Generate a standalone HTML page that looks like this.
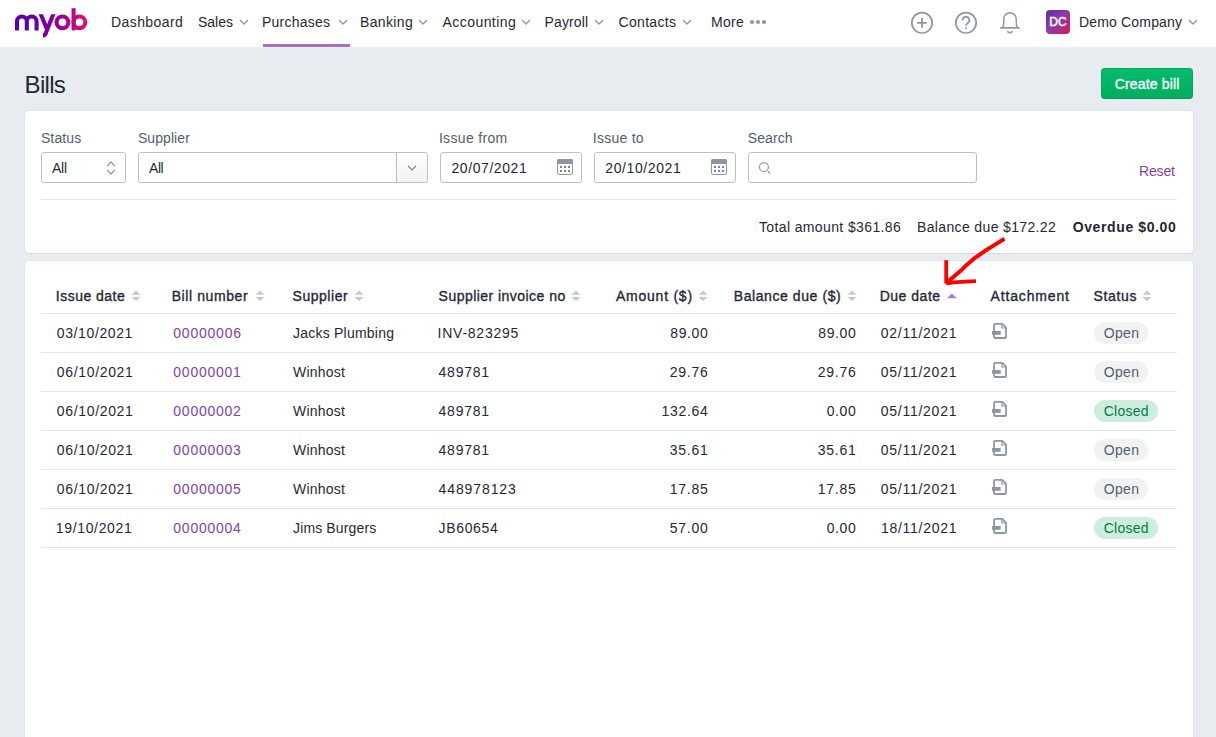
<!DOCTYPE html>
<html><head><meta charset="utf-8">
<style>
*{box-sizing:border-box;margin:0;padding:0}
html,body{width:1216px;height:737px;overflow:hidden}
body{background:#e8ebef;font-family:"Liberation Sans",sans-serif;color:#1f2933;position:relative}
.a{position:absolute}
.t{position:absolute;white-space:nowrap}
.card{position:absolute;background:#fff;border-radius:4px;box-shadow:0 0 0 1px rgba(0,0,0,0.025),0 1px 1px rgba(0,0,0,0.05)}
.inp{position:absolute;border:1px solid #bcc1c8;border-radius:3px;background:#fff}
.rl{position:absolute;left:41px;width:1136px;height:1px;background:#e3e5e9}
</style></head>
<body>
<div class="a" style="left:0;top:0;width:1216px;height:47px;background:#fff"></div><div class="a" style="left:0;top:47px;width:1216px;height:1px;background:#eef0f3"></div>
<div class="a" style="left:1101px;top:68px;width:92px;height:31px;border-radius:4px;background:linear-gradient(#00bd6c,#00ad5e);box-shadow:inset 0 0 0 1px rgba(0,120,60,0.25)"></div>
<div class="card" style="left:25px;top:111px;width:1168px;height:142px"></div>
<div class="card" style="left:25px;top:261px;width:1168px;height:520px"></div>
<div class="inp" style="left:41px;top:152px;width:85px;height:31px"></div><div class="inp" style="left:138px;top:152px;width:290px;height:31px"></div><div class="a" style="left:396px;top:153px;width:31px;height:29px;background:linear-gradient(#ffffff,#f2f2f2);border-left:1px solid #b9bec6;border-radius:0 3px 3px 0"></div><svg class="a" style="left:407px;top:165px" width="10" height="6"><path d="M1,1 L5.0,5 L9,1" fill="none" stroke="#7d8793" stroke-width="1.15"/></svg><div class="inp" style="left:440px;top:152px;width:142px;height:31px"></div><div class="inp" style="left:594px;top:152px;width:142px;height:31px"></div><div class="inp" style="left:748px;top:152px;width:229px;height:31px"></div><svg class="a" style="left:106px;top:161px" width="10" height="14"><path d="M1,5 L5,1 L9,5 M1,9 L5,13 L9,9" fill="none" stroke="#8a949f" stroke-width="1.1"/></svg><svg class="a" style="left:557px;top:159px" width="16" height="16"><rect x="0.5" y="0.5" width="15" height="15" rx="1.5" fill="none" stroke="#8d96a3"/><rect x="0" y="0" width="16" height="5" rx="1.5" fill="#8d96a3"/><rect x="3" y="7" width="2" height="2" fill="#78828e"/><rect x="3" y="11" width="2" height="2" fill="#78828e"/><rect x="7" y="7" width="2" height="2" fill="#78828e"/><rect x="7" y="11" width="2" height="2" fill="#78828e"/><rect x="11" y="7" width="2" height="2" fill="#78828e"/><rect x="11" y="11" width="2" height="2" fill="#78828e"/></svg><svg class="a" style="left:711px;top:159px" width="16" height="16"><rect x="0.5" y="0.5" width="15" height="15" rx="1.5" fill="none" stroke="#8d96a3"/><rect x="0" y="0" width="16" height="5" rx="1.5" fill="#8d96a3"/><rect x="3" y="7" width="2" height="2" fill="#78828e"/><rect x="3" y="11" width="2" height="2" fill="#78828e"/><rect x="7" y="7" width="2" height="2" fill="#78828e"/><rect x="7" y="11" width="2" height="2" fill="#78828e"/><rect x="11" y="7" width="2" height="2" fill="#78828e"/><rect x="11" y="11" width="2" height="2" fill="#78828e"/></svg><svg class="a" style="left:757px;top:160px" width="16" height="16"><circle cx="6.9" cy="7" r="4.5" fill="none" stroke="#939ca8" stroke-width="1.25"/><path d="M11,11.2 L12.9,13.5" stroke="#939ca8" stroke-width="1.3"/></svg>
<div class="rl" style="top:199px"></div><div class="rl" style="top:313px"></div><div class="rl" style="top:352px"></div><div class="rl" style="top:391px"></div><div class="rl" style="top:430px"></div><div class="rl" style="top:469px"></div><div class="rl" style="top:508px"></div><div class="rl" style="top:547px"></div><svg class="a" style="left:131.4px;top:290px" width="10" height="12"><path d="M0.5,4.8 L5,0.5 L9.5,4.8 Z M0.5,6.9 L5,11.2 L9.5,6.9 Z" fill="#c5cad2"/></svg><svg class="a" style="left:254.5px;top:290px" width="10" height="12"><path d="M0.5,4.8 L5,0.5 L9.5,4.8 Z M0.5,6.9 L5,11.2 L9.5,6.9 Z" fill="#c5cad2"/></svg><svg class="a" style="left:354.3px;top:290px" width="10" height="12"><path d="M0.5,4.8 L5,0.5 L9.5,4.8 Z M0.5,6.9 L5,11.2 L9.5,6.9 Z" fill="#c5cad2"/></svg><svg class="a" style="left:571px;top:290px" width="10" height="12"><path d="M0.5,4.8 L5,0.5 L9.5,4.8 Z M0.5,6.9 L5,11.2 L9.5,6.9 Z" fill="#c5cad2"/></svg><svg class="a" style="left:698px;top:290px" width="10" height="12"><path d="M0.5,4.8 L5,0.5 L9.5,4.8 Z M0.5,6.9 L5,11.2 L9.5,6.9 Z" fill="#c5cad2"/></svg><svg class="a" style="left:846.8px;top:290px" width="10" height="12"><path d="M0.5,4.8 L5,0.5 L9.5,4.8 Z M0.5,6.9 L5,11.2 L9.5,6.9 Z" fill="#c5cad2"/></svg><svg class="a" style="left:1142.2px;top:290px" width="10" height="12"><path d="M0.5,4.8 L5,0.5 L9.5,4.8 Z M0.5,6.9 L5,11.2 L9.5,6.9 Z" fill="#c5cad2"/></svg><svg class="a" style="left:946px;top:293px" width="12" height="6"><path d="M1,5.3 L5.9,0.4 L10.8,5.3 Z" fill="#a87bd1"/></svg><svg class="a" style="left:992px;top:322px" width="16" height="18"><path d="M2.1,15 V2.9 Q2.1,1.9 3.1,1.9 H10.3 L14,5.6 V15 Q14,16 13,16 H3.1 Q2.1,16 2.1,15 Z" fill="none" stroke="#8d96a3" stroke-width="1.8" stroke-linejoin="round"/><path d="M9.9,2 V6 H14" fill="none" stroke="#8d96a3" stroke-width="1.2"/><rect x="0" y="9" width="8.7" height="3.8" fill="#8d96a3"/></svg><div class="a" style="left:1094px;top:322px;width:54px;height:22px;border-radius:11px;background:#f1f2f4"></div><svg class="a" style="left:992px;top:361px" width="16" height="18"><path d="M2.1,15 V2.9 Q2.1,1.9 3.1,1.9 H10.3 L14,5.6 V15 Q14,16 13,16 H3.1 Q2.1,16 2.1,15 Z" fill="none" stroke="#8d96a3" stroke-width="1.8" stroke-linejoin="round"/><path d="M9.9,2 V6 H14" fill="none" stroke="#8d96a3" stroke-width="1.2"/><rect x="0" y="9" width="8.7" height="3.8" fill="#8d96a3"/></svg><div class="a" style="left:1094px;top:361px;width:54px;height:22px;border-radius:11px;background:#f1f2f4"></div><svg class="a" style="left:992px;top:400px" width="16" height="18"><path d="M2.1,15 V2.9 Q2.1,1.9 3.1,1.9 H10.3 L14,5.6 V15 Q14,16 13,16 H3.1 Q2.1,16 2.1,15 Z" fill="none" stroke="#8d96a3" stroke-width="1.8" stroke-linejoin="round"/><path d="M9.9,2 V6 H14" fill="none" stroke="#8d96a3" stroke-width="1.2"/><rect x="0" y="9" width="8.7" height="3.8" fill="#8d96a3"/></svg><div class="a" style="left:1094px;top:400px;width:64px;height:22px;border-radius:11px;background:#cdeedc"></div><svg class="a" style="left:992px;top:439px" width="16" height="18"><path d="M2.1,15 V2.9 Q2.1,1.9 3.1,1.9 H10.3 L14,5.6 V15 Q14,16 13,16 H3.1 Q2.1,16 2.1,15 Z" fill="none" stroke="#8d96a3" stroke-width="1.8" stroke-linejoin="round"/><path d="M9.9,2 V6 H14" fill="none" stroke="#8d96a3" stroke-width="1.2"/><rect x="0" y="9" width="8.7" height="3.8" fill="#8d96a3"/></svg><div class="a" style="left:1094px;top:439px;width:54px;height:22px;border-radius:11px;background:#f1f2f4"></div><svg class="a" style="left:992px;top:478px" width="16" height="18"><path d="M2.1,15 V2.9 Q2.1,1.9 3.1,1.9 H10.3 L14,5.6 V15 Q14,16 13,16 H3.1 Q2.1,16 2.1,15 Z" fill="none" stroke="#8d96a3" stroke-width="1.8" stroke-linejoin="round"/><path d="M9.9,2 V6 H14" fill="none" stroke="#8d96a3" stroke-width="1.2"/><rect x="0" y="9" width="8.7" height="3.8" fill="#8d96a3"/></svg><div class="a" style="left:1094px;top:478px;width:54px;height:22px;border-radius:11px;background:#f1f2f4"></div><svg class="a" style="left:992px;top:517px" width="16" height="18"><path d="M2.1,15 V2.9 Q2.1,1.9 3.1,1.9 H10.3 L14,5.6 V15 Q14,16 13,16 H3.1 Q2.1,16 2.1,15 Z" fill="none" stroke="#8d96a3" stroke-width="1.8" stroke-linejoin="round"/><path d="M9.9,2 V6 H14" fill="none" stroke="#8d96a3" stroke-width="1.2"/><rect x="0" y="9" width="8.7" height="3.8" fill="#8d96a3"/></svg><div class="a" style="left:1094px;top:517px;width:64px;height:22px;border-radius:11px;background:#cdeedc"></div><svg class="a" style="left:930px;top:230px" width="90" height="70"><g fill="none" stroke="#ff0000" stroke-linejoin="round"><path d="M74.5,8.8 L65.9,14.1 L55.1,20.8 L44.2,28.4 L36.6,34.9 L31.2,40.3 L22.5,47.7 L16.6,52.6" stroke-width="4"/><path d="M16.2,30.2 V53.6" stroke-width="3.8"/><path d="M16.2,53.3 L27,52.2 L46,51.1" stroke-width="3.8"/></g></svg>
<svg class="a" style="left:238.5px;top:19px" width="10" height="6"><path d="M1,1 L5.0,5 L9,1" fill="none" stroke="#8e99a6" stroke-width="1.3"/></svg><svg class="a" style="left:337.5px;top:19px" width="10" height="6"><path d="M1,1 L5.0,5 L9,1" fill="none" stroke="#8e99a6" stroke-width="1.3"/></svg><svg class="a" style="left:417.5px;top:19px" width="10" height="6"><path d="M1,1 L5.0,5 L9,1" fill="none" stroke="#8e99a6" stroke-width="1.3"/></svg><svg class="a" style="left:520.5px;top:19px" width="10" height="6"><path d="M1,1 L5.0,5 L9,1" fill="none" stroke="#8e99a6" stroke-width="1.3"/></svg><svg class="a" style="left:593.5px;top:19px" width="10" height="6"><path d="M1,1 L5.0,5 L9,1" fill="none" stroke="#8e99a6" stroke-width="1.3"/></svg><svg class="a" style="left:682px;top:19px" width="10" height="6"><path d="M1,1 L5.0,5 L9,1" fill="none" stroke="#8e99a6" stroke-width="1.3"/></svg><svg class="a" style="left:1188px;top:19px" width="10" height="6"><path d="M1,1 L5.0,5 L9,1" fill="none" stroke="#8e99a6" stroke-width="1.3"/></svg><svg class="a" style="left:748px;top:18px" width="20" height="8"><circle cx="4" cy="4" r="2.1" fill="#8e99a6"/><circle cx="10" cy="4" r="2.1" fill="#8e99a6"/><circle cx="16" cy="4" r="2.1" fill="#8e99a6"/></svg><svg class="a" style="left:910px;top:11px" width="24" height="24"><circle cx="12" cy="11.8" r="10.2" fill="none" stroke="#8e99a6" stroke-width="1.7"/><path d="M7.2,11.8 H16.8 M12,7 V16.8" stroke="#8e99a6" stroke-width="1.8"/></svg><svg class="a" style="left:954px;top:11px" width="24" height="24"><circle cx="12" cy="11.8" r="10.2" fill="none" stroke="#8e99a6" stroke-width="1.7"/><path d="M8.6,9.4 A3.4,3.4 0 1 1 13.6,12.2 C12.6,12.9 12,13.3 12,14.4 V14.8" fill="none" stroke="#8e99a6" stroke-width="1.8"/><rect x="11.1" y="16.4" width="1.8" height="1.7" fill="#8e99a6"/></svg><svg class="a" style="left:998px;top:10px" width="24" height="26"><path d="M4.6,17.6 C5.8,16.2 5.75,14.2 5.75,12 V9 A6.25,6.25 0 0 1 18.25,9 V12 C18.25,14.2 18.2,16.2 19.4,17.6" fill="none" stroke="#8e99a6" stroke-width="1.5" stroke-linejoin="round"/><path d="M2.8,17.9 H21.2" stroke="#8e99a6" stroke-width="1.6" stroke-linecap="round"/><path d="M9.7,21.7 Q12,23.8 14.3,21.7" fill="none" stroke="#8e99a6" stroke-width="1.6" stroke-linecap="round"/></svg><svg class="a" style="left:1046px;top:10px" width="24" height="24"><defs><linearGradient id="av" x1="0" y1="0" x2="1" y2="1"><stop offset="0" stop-color="#5d2e91"/><stop offset="0.45" stop-color="#8a3daf"/><stop offset="1" stop-color="#d8174f"/></linearGradient></defs><rect width="24" height="24" rx="4" fill="url(#av)"/><text x="12" y="16.3" text-anchor="middle" font-family="Liberation Sans" font-size="12" stroke="#fff" stroke-width="0.45" fill="#fff">DC</text></svg><svg class="a" style="left:0px;top:0px" width="100" height="46"><defs><linearGradient id="lg" gradientUnits="userSpaceOnUse" x1="15" y1="0" x2="88" y2="0"><stop offset="0" stop-color="#5a00aa"/><stop offset="0.35" stop-color="#6c00a6"/><stop offset="0.65" stop-color="#a0008e"/><stop offset="1" stop-color="#ea0f6f"/></linearGradient><clipPath id="yc"><rect x="30" y="14.3" width="30" height="30"/></clipPath></defs>
<g fill="none" stroke="url(#lg)" stroke-width="4.1">
<path d="M17,30.4 V21.4 A4.9,4.9 0 0 1 26.8,21.4 V30.4 M26.8,21.4 A4.9,4.9 0 0 1 36.6,21.4 V30.4"/>
<path clip-path="url(#yc)" d="M40.3,13 L47.4,30.2 M53.8,13 L45.6,33.6 Q44.8,35.4 43,35.4"/>
<circle cx="62.45" cy="22.35" r="5.9"/>
<path d="M73.6,8.2 V30.4"/><circle cx="79.4" cy="22.35" r="5.9"/>
</g></svg><div class="a" style="left:263px;top:44px;width:87px;height:3px;background:#a370c6"></div>
<div class="t" style="left:111.00px;top:14.15px;font-size:14px;line-height:16px;letter-spacing:0.412px">Dashboard</div>
<div class="t" style="left:198.00px;top:14.15px;font-size:14px;line-height:16px;letter-spacing:-0.005px">Sales</div>
<div class="t" style="left:262.00px;top:14.15px;font-size:14px;line-height:16px;letter-spacing:0.232px">Purchases</div>
<div class="t" style="left:360.00px;top:14.15px;font-size:14px;line-height:16px;letter-spacing:0.366px">Banking</div>
<div class="t" style="left:442.50px;top:14.15px;font-size:14px;line-height:16px;letter-spacing:0.446px">Accounting</div>
<div class="t" style="left:544.50px;top:14.15px;font-size:14px;line-height:16px;letter-spacing:0.136px">Payroll</div>
<div class="t" style="left:618.50px;top:14.15px;font-size:14px;line-height:16px;letter-spacing:0.322px">Contacts</div>
<div class="t" style="left:711.00px;top:14.15px;font-size:14px;line-height:16px;letter-spacing:0.297px">More</div>
<div class="t" style="left:1079.00px;top:14.15px;font-size:14px;line-height:16px;letter-spacing:0.168px">Demo Company</div>
<div class="t" style="left:24.60px;top:70.68px;font-size:24px;line-height:28px;letter-spacing:-0.701px">Bills</div>
<div class="t" style="left:1114.70px;top:76.15px;font-size:14px;line-height:16px;letter-spacing:0.168px;-webkit-text-stroke:0.35px #ffffff;color:#ffffff">Create bill</div>
<div class="t" style="left:40.90px;top:130.15px;font-size:14px;line-height:16px;letter-spacing:0.142px;color:#515e6d">Status</div>
<div class="t" style="left:137.90px;top:130.15px;font-size:14px;line-height:16px;letter-spacing:0.085px;color:#515e6d">Supplier</div>
<div class="t" style="left:438.90px;top:130.15px;font-size:14px;line-height:16px;letter-spacing:0.335px;color:#515e6d">Issue from</div>
<div class="t" style="left:592.80px;top:130.15px;font-size:14px;line-height:16px;letter-spacing:0.251px;color:#515e6d">Issue to</div>
<div class="t" style="left:747.80px;top:130.15px;font-size:14px;line-height:16px;letter-spacing:0.086px;color:#515e6d">Search</div>
<div class="t" style="left:52.00px;top:160.15px;font-size:14px;line-height:16px;letter-spacing:-0.224px">All</div>
<div class="t" style="left:149.00px;top:160.15px;font-size:14px;line-height:16px;letter-spacing:-0.424px">All</div>
<div class="t" style="left:451.40px;top:160.15px;font-size:14px;line-height:16px;letter-spacing:0.591px">20/07/2021</div>
<div class="t" style="left:605.30px;top:160.15px;font-size:14px;line-height:16px;letter-spacing:0.602px">20/10/2021</div>
<div class="t" style="left:1139.00px;top:163.15px;font-size:14px;line-height:16px;letter-spacing:-0.171px;color:#8241aa">Reset</div>
<div class="t" style="left:758.90px;top:219.15px;font-size:14px;line-height:16px;letter-spacing:0.381px">Total amount $361.86</div>
<div class="t" style="left:917.00px;top:219.15px;font-size:14px;line-height:16px;letter-spacing:0.358px">Balance due $172.22</div>
<div class="t" style="left:1072.70px;top:219.15px;font-size:14px;line-height:16px;letter-spacing:0.614px;font-weight:700">Overdue $0.00</div>
<div class="t" style="left:55.80px;top:288.15px;font-size:14px;line-height:16px;letter-spacing:0.487px;-webkit-text-stroke:0.35px #1f2933">Issue date</div>
<div class="t" style="left:171.70px;top:288.15px;font-size:14px;line-height:16px;letter-spacing:0.593px;-webkit-text-stroke:0.35px #1f2933">Bill number</div>
<div class="t" style="left:292.50px;top:288.15px;font-size:14px;line-height:16px;letter-spacing:0.542px;-webkit-text-stroke:0.35px #1f2933">Supplier</div>
<div class="t" style="left:438.60px;top:288.15px;font-size:14px;line-height:16px;letter-spacing:0.461px;-webkit-text-stroke:0.35px #1f2933">Supplier invoice no</div>
<div class="t" style="left:616.00px;top:288.15px;font-size:14px;line-height:16px;letter-spacing:0.757px;-webkit-text-stroke:0.35px #1f2933">Amount ($)</div>
<div class="t" style="left:733.80px;top:288.15px;font-size:14px;line-height:16px;letter-spacing:0.573px;-webkit-text-stroke:0.35px #1f2933">Balance due ($)</div>
<div class="t" style="left:879.70px;top:288.15px;font-size:14px;line-height:16px;letter-spacing:0.509px;-webkit-text-stroke:0.35px #1f2933">Due date</div>
<div class="t" style="left:990.60px;top:288.15px;font-size:14px;line-height:16px;letter-spacing:0.831px;-webkit-text-stroke:0.35px #1f2933">Attachment</div>
<div class="t" style="left:1093.60px;top:288.15px;font-size:14px;line-height:16px;letter-spacing:0.642px;-webkit-text-stroke:0.35px #1f2933">Status</div>
<div class="t" style="left:56.80px;top:325.15px;font-size:14px;line-height:16px;letter-spacing:0.613px">03/10/2021</div>
<div class="t" style="left:173.30px;top:325.15px;font-size:14px;line-height:16px;letter-spacing:0.771px;color:#8241aa">00000006</div>
<div class="t" style="left:293.00px;top:325.15px;font-size:14px;line-height:16px;letter-spacing:0.227px">Jacks Plumbing</div>
<div class="t" style="left:437.60px;top:325.15px;font-size:14px;line-height:16px;letter-spacing:0.749px">INV-823295</div>
<div class="t" style="left:670.30px;top:325.15px;font-size:14px;line-height:16px;letter-spacing:0.613px">89.00</div>
<div class="t" style="left:818.30px;top:325.15px;font-size:14px;line-height:16px;letter-spacing:0.613px">89.00</div>
<div class="t" style="left:880.70px;top:325.15px;font-size:14px;line-height:16px;letter-spacing:0.751px">02/11/2021</div>
<div class="t" style="left:1103.70px;top:325.15px;font-size:14px;line-height:16px;letter-spacing:0.346px;color:#515e6d">Open</div>
<div class="t" style="left:56.80px;top:364.15px;font-size:14px;line-height:16px;letter-spacing:0.664px">06/10/2021</div>
<div class="t" style="left:173.30px;top:364.15px;font-size:14px;line-height:16px;letter-spacing:0.759px;color:#8241aa">00000001</div>
<div class="t" style="left:293.00px;top:364.15px;font-size:14px;line-height:16px;letter-spacing:0.236px">Winhost</div>
<div class="t" style="left:438.60px;top:364.15px;font-size:14px;line-height:16px;letter-spacing:0.734px">489781</div>
<div class="t" style="left:669.76px;top:364.15px;font-size:14px;line-height:16px;letter-spacing:0.749px">29.76</div>
<div class="t" style="left:817.76px;top:364.15px;font-size:14px;line-height:16px;letter-spacing:0.749px">29.76</div>
<div class="t" style="left:880.70px;top:364.15px;font-size:14px;line-height:16px;letter-spacing:0.751px">05/11/2021</div>
<div class="t" style="left:1103.70px;top:364.15px;font-size:14px;line-height:16px;letter-spacing:0.346px;color:#515e6d">Open</div>
<div class="t" style="left:56.80px;top:403.15px;font-size:14px;line-height:16px;letter-spacing:0.664px">06/10/2021</div>
<div class="t" style="left:173.30px;top:403.15px;font-size:14px;line-height:16px;letter-spacing:0.759px;color:#8241aa">00000002</div>
<div class="t" style="left:293.00px;top:403.15px;font-size:14px;line-height:16px;letter-spacing:0.236px">Winhost</div>
<div class="t" style="left:438.60px;top:403.15px;font-size:14px;line-height:16px;letter-spacing:0.734px">489781</div>
<div class="t" style="left:661.40px;top:403.15px;font-size:14px;line-height:16px;letter-spacing:0.713px">132.64</div>
<div class="t" style="left:826.70px;top:403.15px;font-size:14px;line-height:16px;letter-spacing:0.613px">0.00</div>
<div class="t" style="left:880.70px;top:403.15px;font-size:14px;line-height:16px;letter-spacing:0.751px">05/11/2021</div>
<div class="t" style="left:1103.70px;top:403.15px;font-size:14px;line-height:16px;letter-spacing:0.261px;color:#007d46">Closed</div>
<div class="t" style="left:56.80px;top:442.15px;font-size:14px;line-height:16px;letter-spacing:0.664px">06/10/2021</div>
<div class="t" style="left:173.30px;top:442.15px;font-size:14px;line-height:16px;letter-spacing:0.759px;color:#8241aa">00000003</div>
<div class="t" style="left:293.00px;top:442.15px;font-size:14px;line-height:16px;letter-spacing:0.236px">Winhost</div>
<div class="t" style="left:438.60px;top:442.15px;font-size:14px;line-height:16px;letter-spacing:0.734px">489781</div>
<div class="t" style="left:669.76px;top:442.15px;font-size:14px;line-height:16px;letter-spacing:0.749px">35.61</div>
<div class="t" style="left:817.76px;top:442.15px;font-size:14px;line-height:16px;letter-spacing:0.749px">35.61</div>
<div class="t" style="left:880.70px;top:442.15px;font-size:14px;line-height:16px;letter-spacing:0.751px">05/11/2021</div>
<div class="t" style="left:1103.70px;top:442.15px;font-size:14px;line-height:16px;letter-spacing:0.346px;color:#515e6d">Open</div>
<div class="t" style="left:56.80px;top:481.15px;font-size:14px;line-height:16px;letter-spacing:0.664px">06/10/2021</div>
<div class="t" style="left:173.30px;top:481.15px;font-size:14px;line-height:16px;letter-spacing:0.759px;color:#8241aa">00000005</div>
<div class="t" style="left:293.00px;top:481.15px;font-size:14px;line-height:16px;letter-spacing:0.236px">Winhost</div>
<div class="t" style="left:438.60px;top:481.15px;font-size:14px;line-height:16px;letter-spacing:0.889px">448978123</div>
<div class="t" style="left:669.84px;top:481.15px;font-size:14px;line-height:16px;letter-spacing:0.728px">17.85</div>
<div class="t" style="left:817.84px;top:481.15px;font-size:14px;line-height:16px;letter-spacing:0.728px">17.85</div>
<div class="t" style="left:880.70px;top:481.15px;font-size:14px;line-height:16px;letter-spacing:0.751px">05/11/2021</div>
<div class="t" style="left:1103.70px;top:481.15px;font-size:14px;line-height:16px;letter-spacing:0.346px;color:#515e6d">Open</div>
<div class="t" style="left:55.80px;top:520.15px;font-size:14px;line-height:16px;letter-spacing:0.654px">19/10/2021</div>
<div class="t" style="left:173.30px;top:520.15px;font-size:14px;line-height:16px;letter-spacing:0.759px;color:#8241aa">00000004</div>
<div class="t" style="left:293.00px;top:520.15px;font-size:14px;line-height:16px;letter-spacing:0.138px">Jims Burgers</div>
<div class="t" style="left:438.60px;top:520.15px;font-size:14px;line-height:16px;letter-spacing:0.636px">JB60654</div>
<div class="t" style="left:669.76px;top:520.15px;font-size:14px;line-height:16px;letter-spacing:0.749px">57.00</div>
<div class="t" style="left:826.70px;top:520.15px;font-size:14px;line-height:16px;letter-spacing:0.613px">0.00</div>
<div class="t" style="left:880.90px;top:520.15px;font-size:14px;line-height:16px;letter-spacing:0.729px">18/11/2021</div>
<div class="t" style="left:1103.70px;top:520.15px;font-size:14px;line-height:16px;letter-spacing:0.261px;color:#007d46">Closed</div>
</body></html>
